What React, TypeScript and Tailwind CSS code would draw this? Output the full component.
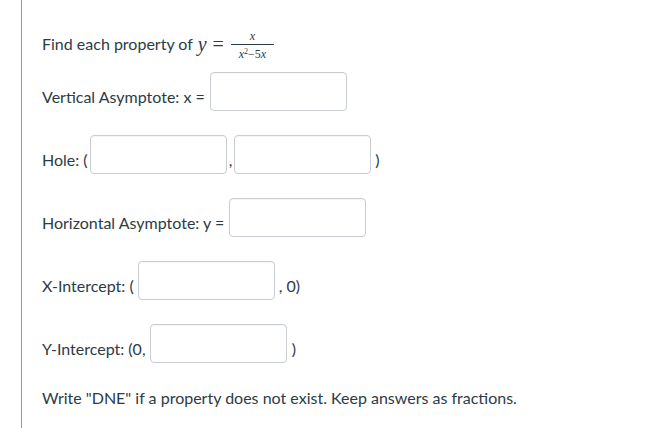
const box =
  "h-[39px] w-[137px] rounded-[4px] border border-[#c7cdd1] bg-white shadow-[inset_0_1px_1px_rgba(0,0,0,0.04)]";

function Row({ children, className = "" }: { children: React.ReactNode; className?: string }) {
  return <div className={`flex items-end ${className}`}>{children}</div>;
}

function Label({ children, className = "" }: { children: React.ReactNode; className?: string }) {
  return <span className={`mb-[4px] leading-[20px] whitespace-pre ${className}`}>{children}</span>;
}

const serif = { fontFamily: "'Liberation Serif', 'DejaVu Serif', serif" };

export default function App() {
  return (
    <div className="h-[428px] w-[659px] bg-white">
      <div
        className="ml-[21px] h-full border-l border-[#9a9a9a] pl-[20px] text-[16px] text-[#2d3b45]"
        style={{ fontFamily: "Lato, 'Noto Sans', sans-serif" }}
      >
        <div className="box-content flex h-[24px] items-center pt-[32px]">
          <span className="leading-[24px] whitespace-pre">Find each property of </span>
          <span className="ml-[1px] text-[20px] italic leading-[24px]" style={serif}>
            y
          </span>
          <span className="ml-[6px] text-[20px] leading-[24px]" style={serif}>
            =
          </span>
          <span className="ml-[7px] mt-[1px] inline-flex flex-col items-center" style={serif}>
            <span className="mb-[1px] text-[12px] italic leading-[14px]">x</span>
            <span className="h-px w-[43px] bg-[#2d3b45]" />
            <span className="mt-[2px] text-[12px] leading-[14px] whitespace-pre">
              <i>x</i>
              <sup className="text-[8px]">2</sup>
              {"\u2212"}5<i>x</i>
            </span>
          </span>
        </div>

        <Row className="mt-[16px]">
          <Label>Vertical Asymptote: x = </Label>
          <div className={`ml-[1px] ${box}`} />
        </Row>

        <Row className="mt-[24px]">
          <Label>Hole: (</Label>
          <div className={`ml-[2px] ${box}`} />
          <Label className="mx-[2px]">,</Label>
          <div className={box} />
          <Label className="ml-[4px]">)</Label>
        </Row>

        <Row className="mt-[24px]">
          <Label>Horizontal Asymptote: y = </Label>
          <div className={`ml-[1px] ${box}`} />
        </Row>

        <Row className="mt-[24px]">
          <Label>X-Intercept: ( </Label>
          <div className={box} />
          <Label className="ml-[4px]">, 0)</Label>
        </Row>

        <Row className="mt-[24px]">
          <Label>Y-Intercept: (0, </Label>
          <div className={box} />
          <Label className="ml-[5px]">)</Label>
        </Row>

        <p className="mt-[23px] leading-[24px]">
          Write "DNE" if a property does not exist. Keep answers as fractions.
        </p>
      </div>
    </div>
  );
}
